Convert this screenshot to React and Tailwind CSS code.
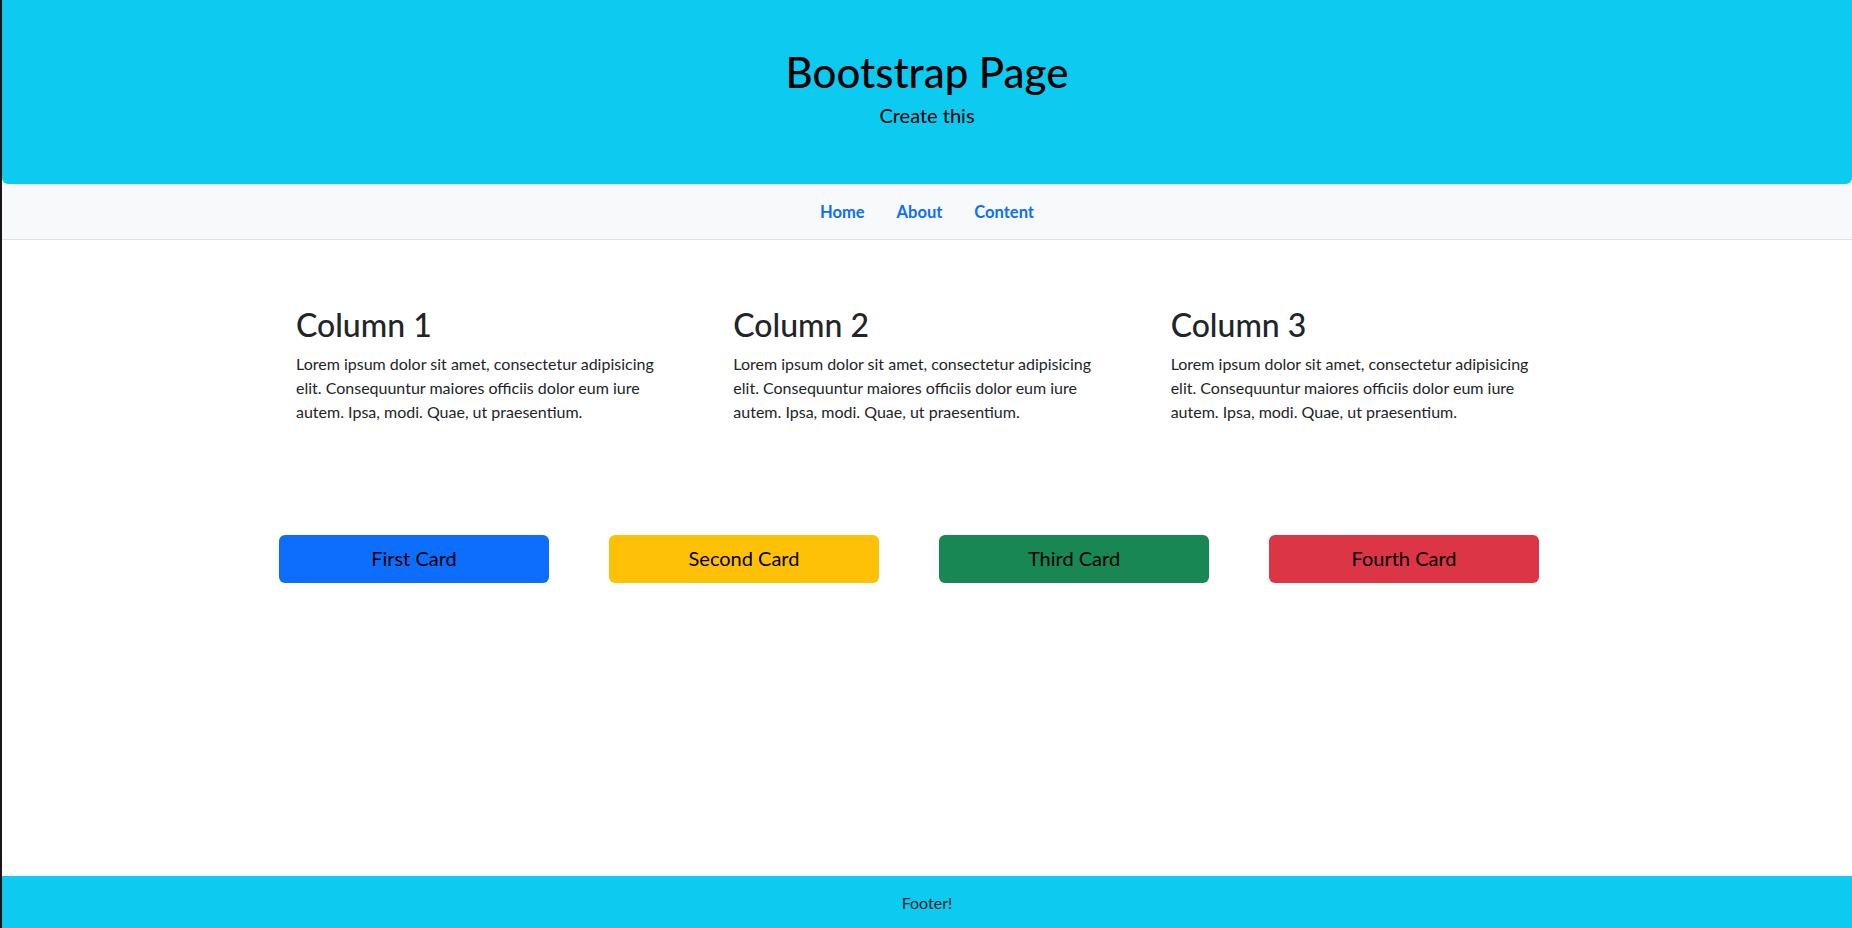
export default function App() {
    const columns = ["Column 1", "Column 2", "Column 3"];
    const lorem =
        "Lorem ipsum dolor sit amet, consectetur adipisicing elit. Consequuntur maiores officiis dolor eum iure autem. Ipsa, modi. Quae, ut praesentium.";

    const cards = [
        { label: "First Card", color: "bg-[#0d6efd]" },
        { label: "Second Card", color: "bg-[#ffc107]" },
        { label: "Third Card", color: "bg-[#198754]" },
        { label: "Fourth Card", color: "bg-[#dc3545]" },
    ];

    return (
        <div className="min-h-screen flex flex-col border-l-2 border-[#1b1417] bg-white text-[#212529] font-['Lato',sans-serif]">

            {/* Header */}
            <header className="bg-[#0dcaf0] rounded-b-md h-[184px] flex flex-col items-center pt-[47px] text-black">
                <h1 className="text-[42px] font-medium leading-[1.2]">Bootstrap Page</h1>
                <p className="text-[20px] leading-[1.5] mt-[3px]">Create this</p>
            </header>

            {/* Nav */}
            <nav className="bg-[#f8f9fa] border-b border-[#dee2e6] h-[56px] pt-[2px] flex justify-center items-center gap-8 font-bold text-[#0d6efd] text-[16.5px]">
                <a href="#">Home</a>
                <a href="#">About</a>
                <a href="#">Content</a>
            </nav>

            <main className="flex-1">
                {/* Columns */}
                <div className="ml-[282px] w-[1312px] grid grid-cols-3 mt-[66px]">
                    {columns.map((c) => (
                        <div key={c} className="px-3">
                            <h2 className="text-[32px] font-medium leading-[1.2] mb-2 text-[#212529]">{c}</h2>
                            <p className="text-base leading-6 max-w-[372px]">{lorem}</p>
                        </div>
                    ))}
                </div>

                {/* Cards */}
                <div className="ml-[277px] mt-[111px] flex gap-[60px]">
                    {cards.map((c) => (
                        <div
                            key={c.label}
                            className={`${c.color} w-[270px] h-[48px] rounded-md flex items-center justify-center text-[20px] text-black pb-[2px]`}
                        >
                            {c.label}
                        </div>
                    ))}
                </div>
            </main>

            {/* Footer */}
            <footer className="bg-[#0dcaf0] h-[52px] flex items-center justify-center text-base text-[#212529] pt-[2px]">
                Footer!
            </footer>
        </div>
    );
}
